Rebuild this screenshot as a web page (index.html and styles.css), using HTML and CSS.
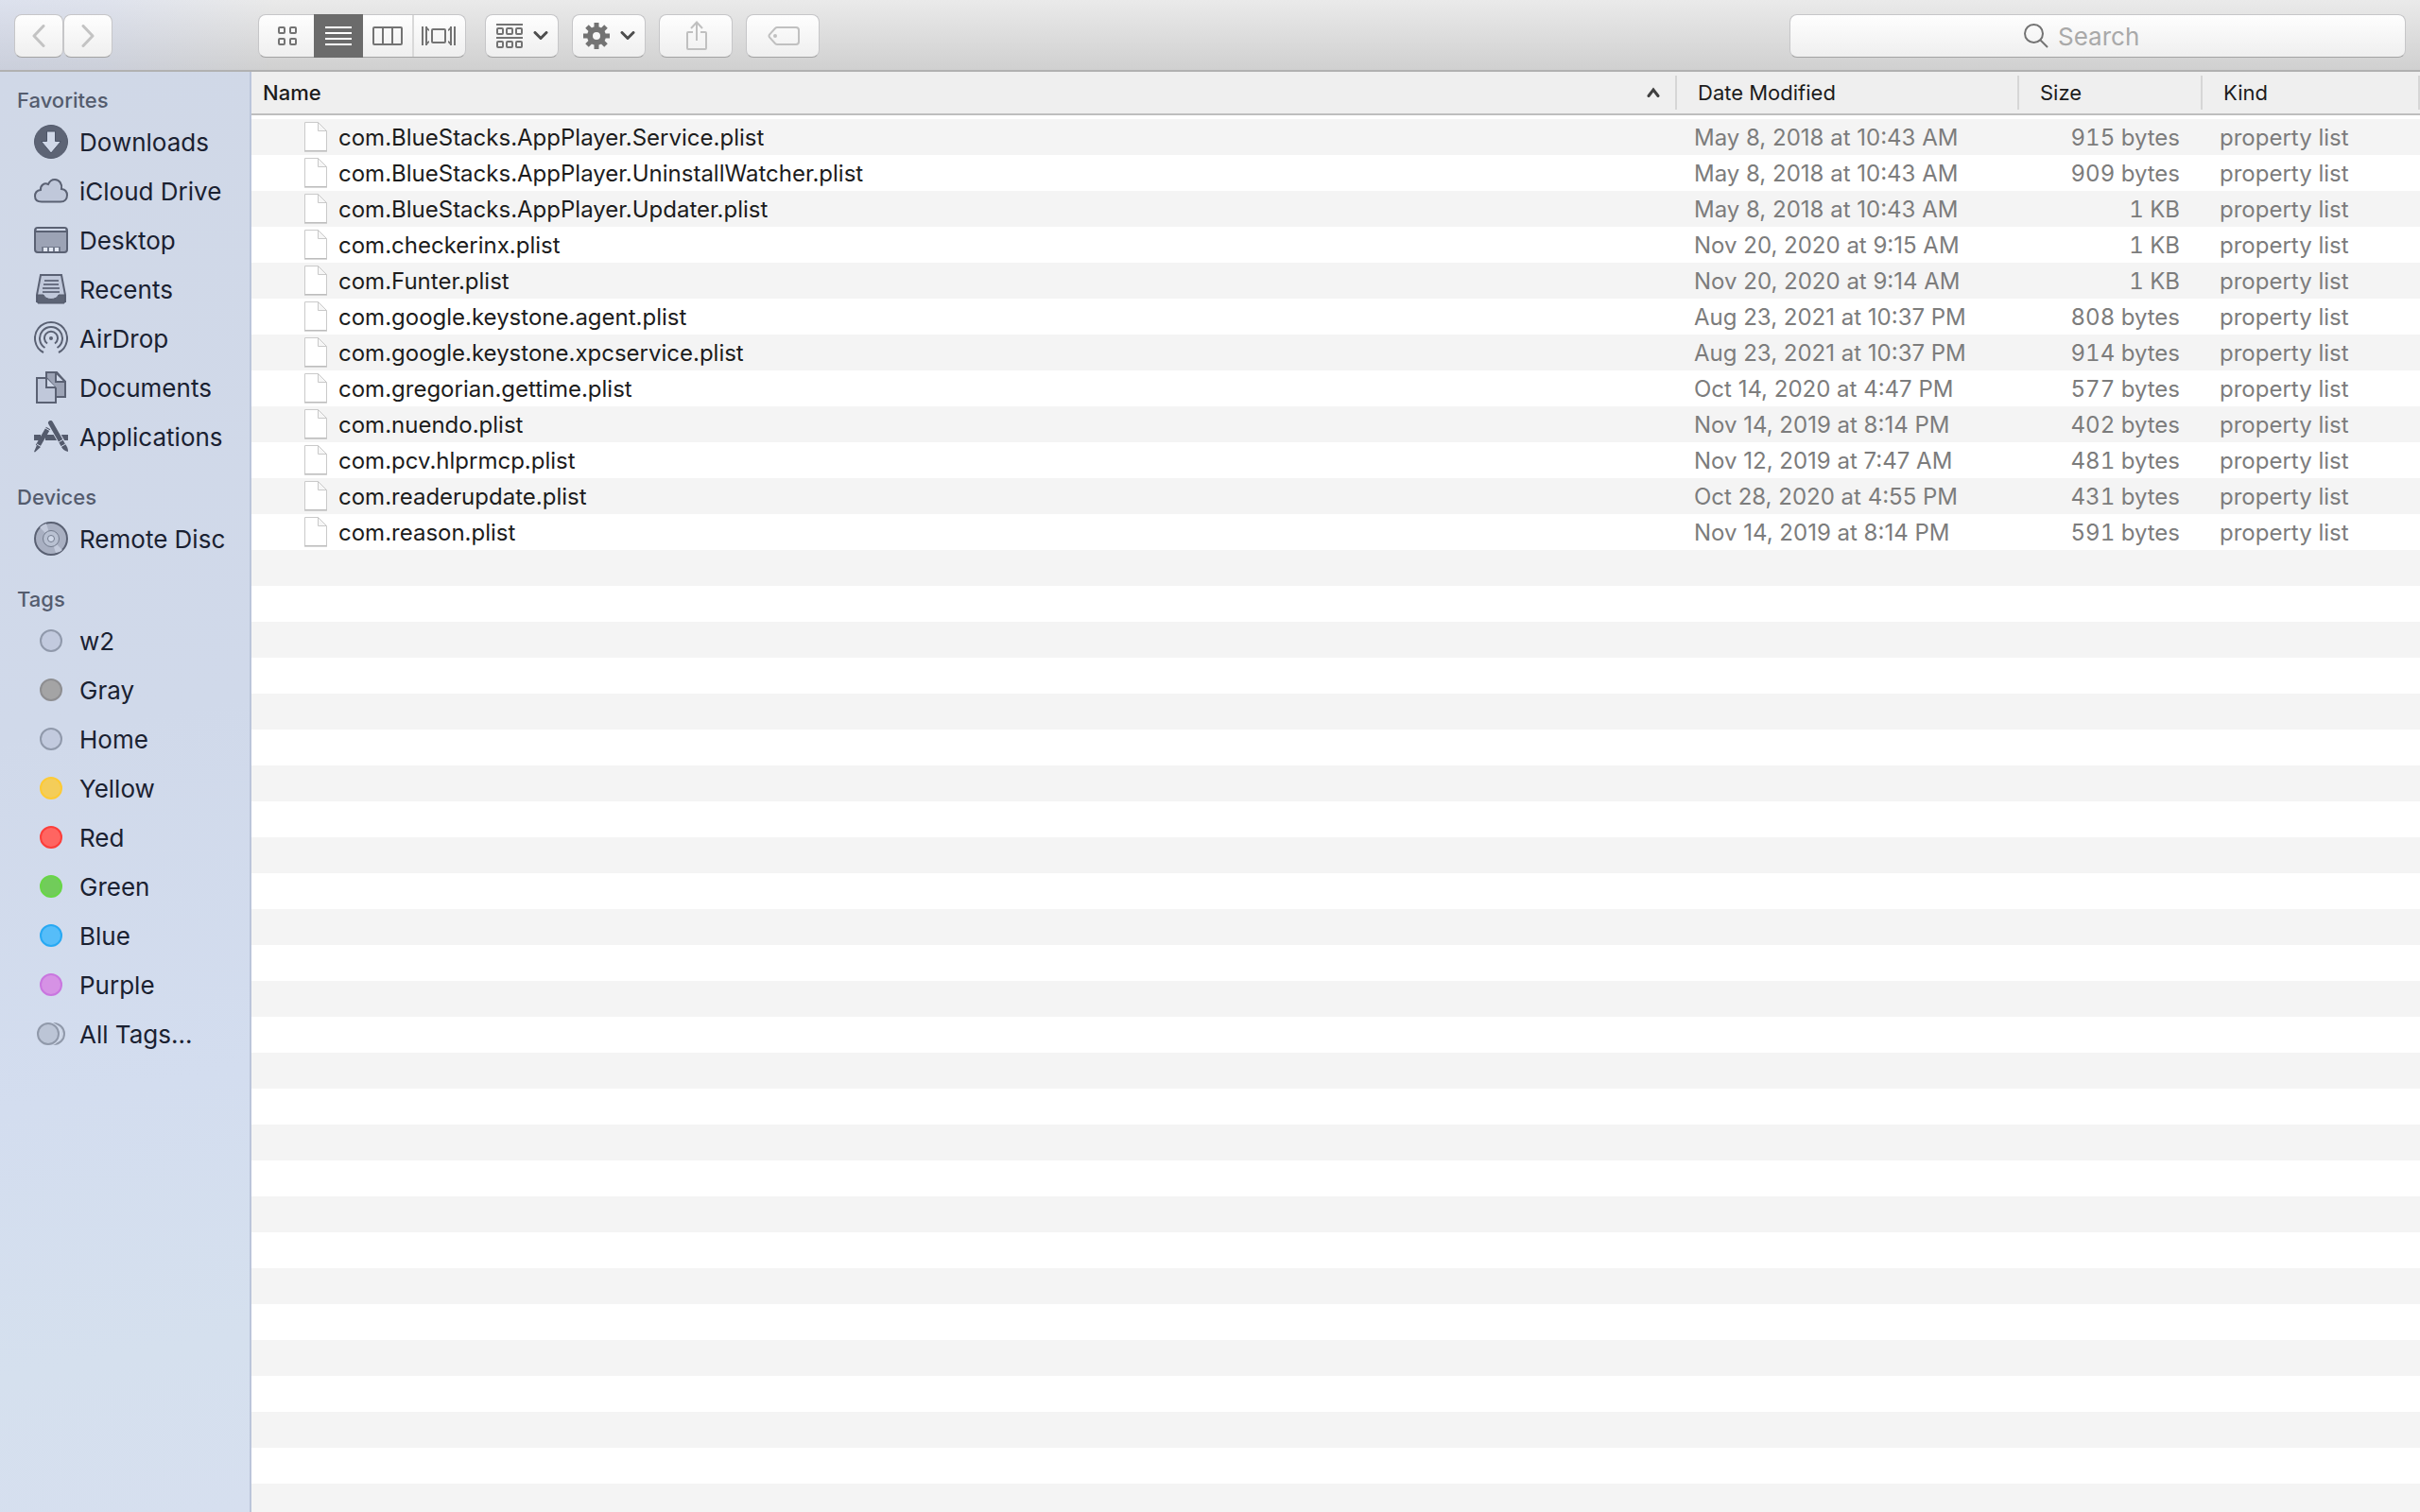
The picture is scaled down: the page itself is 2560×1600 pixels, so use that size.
FILE: index.html
```html
<!DOCTYPE html>
<html lang="en">
<head>
    <meta charset="utf-8">
    <title>LaunchAgents</title>
    <link rel="stylesheet" href="styles.css">
</head>
<body>
    <!-- shared file icon -->
    <svg class="defs" width="0" height="0" aria-hidden="true">
        <symbol id="file" viewBox="0 0 24 32">
            <path d="M.5 .5h14l9 9.500v20.500h-23z" fill="#fff" stroke="#cacaca"/>
            <path d="M14.500 .5v9h9z" fill="#f6f6f6" stroke="#c9c9c9"/>
            <path d="M0 31h24" stroke="#b0b0b0"/>
        </symbol>
        <symbol id="chevron" viewBox="0 0 16 10">
            <path d="M2 1.500l6 6 6-6" fill="none" stroke="#4d4d4d" stroke-width="3" stroke-linecap="round" stroke-linejoin="round"/>
        </symbol>
    </svg>

    <header class="toolbar">
        <div class="nav-buttons">
            <button class="btn nav" type="button" aria-label="Back">
                <svg width="14" height="24" viewBox="0 0 14 24"><path d="M12 1.500L2 12l10 10.500" fill="none" stroke="#c3c3c3" stroke-width="3" stroke-linecap="round" stroke-linejoin="round"/></svg>
            </button>
            <button class="btn nav" type="button" aria-label="Forward">
                <svg width="14" height="24" viewBox="0 0 14 24"><path d="M2 1.500L12 12 2 22.500" fill="none" stroke="#c3c3c3" stroke-width="3" stroke-linecap="round" stroke-linejoin="round"/></svg>
            </button>
        </div>

        <div class="views">
            <button class="view view-first" type="button" aria-label="Icon view">
                <svg width="20" height="20" fill="none" stroke="#737373" stroke-width="2"><rect x="1" y="1" width="6" height="6" rx="1"/><rect x="13" y="1" width="6" height="6" rx="1"/><rect x="1" y="13" width="6" height="6" rx="1"/><rect x="13" y="13" width="6" height="6" rx="1"/></svg>
            </button>
            <button class="view active" type="button" aria-label="List view" aria-pressed="true">
                <svg width="28" height="20" stroke="#fff" stroke-width="2"><path d="M0 1h28M0 7h28M0 13h28M0 19h28"/></svg>
            </button>
            <button class="view" type="button" aria-label="Column view">
                <svg width="32" height="20" fill="none" stroke="#737373" stroke-width="2"><rect x="1" y="1" width="30" height="18" rx="1"/><path d="M11 1v18M21 1v18"/></svg>
            </button>
            <button class="view view-last" type="button" aria-label="Cover Flow view">
                <svg width="36" height="20" fill="none" stroke="#737373" stroke-width="2"><rect x="11" y="3" width="14" height="14" rx="1"/><path d="M1 0v20M35 0v20M5 0v20M31 0v20"/><path d="M5 0l3 3v2L5 3zM5 20l3-3v-2l-3 2zM31 0l-3 3v2l3-2zM31 20l-3-3v-2l3 2z" fill="#737373" stroke="none"/></svg>
            </button>
        </div>

        <div class="actions">
            <button class="btn action" type="button" aria-label="Arrange">
                <svg width="28" height="26" fill="none" stroke="#737373" stroke-width="2"><path d="M0 1h28M0 15h28"/><rect x="1" y="5" width="6" height="6" rx="1"/><rect x="11" y="5" width="6" height="6" rx="1"/><rect x="21" y="5" width="6" height="6" rx="1"/><rect x="1" y="19" width="6" height="6" rx="1"/><rect x="11" y="19" width="6" height="6" rx="1"/><rect x="21" y="19" width="6" height="6" rx="1"/></svg>
                <svg width="16" height="10"><use href="#chevron"/></svg>
            </button>
            <button class="btn action" type="button" aria-label="Action">
                <svg width="28" height="28" viewBox="-14 -14 28 28"><circle r="7" fill="none" stroke="#737373" stroke-width="6"/><path d="M0-14v5M0 14v-5M-14 0h5M14 0h-5M-10-10l4 4M10 10l-4-4M-10 10l4-4M10-10l-4 4" stroke="#737373" stroke-width="5"/></svg>
                <svg width="16" height="10"><use href="#chevron"/></svg>
            </button>
            <button class="btn action" type="button" aria-label="Share">
                <svg width="22" height="32" viewBox="0 0 22 32" fill="none" stroke="#c0c0c0" stroke-width="2"><path d="M7 12H2q-1 0-1 1v16q0 1 1 1h18q1 0 1-1V13q0-1-1-1h-5M11 21V2M5 8l6-6.500L17 8"/></svg>
            </button>
            <button class="btn action" type="button" aria-label="Edit tags">
                <svg width="34" height="20" viewBox="0 0 34 20" fill="none" stroke="#c0c0c0" stroke-width="2"><path d="M10 1h20q3 0 3 3v12q0 3-3 3H10q-1 0-2-1L2 11.500Q1 10 2 8.500L8 2q1-1 2-1z"/><circle cx="8" cy="10" r="2" fill="#c0c0c0" stroke="none"/></svg>
            </button>
        </div>

        <label class="search">
            <svg width="26" height="26" viewBox="0 0 26 26" fill="none" stroke="#737373" stroke-width="2"><circle cx="10.500" cy="10.500" r="9.500"/><path d="M17 17l8 8"/></svg>
            <input type="search" placeholder="Search" aria-label="Search">
        </label>
    </header>

    <div class="window">
        <nav class="sidebar">
            <section>
                <h2>Favorites</h2>
                <ul>
                    <li><a href="#downloads">
                        <span class="icon"><svg width="36" height="36"><circle cx="18" cy="18" r="17.500" fill="#5d6475" stroke="#545b6d"/><path d="M13.500 7h9v10.500h6L18 30 7.500 17.500h6z" fill="#d0d8e8" stroke="#4c5467"/></svg></span>
                        Downloads</a></li>
                    <li><a href="#icloud">
                        <span class="icon"><svg width="36" height="26" viewBox="0 0 36 26"><path d="M8 24.500C3.500 24.500 1 22 1 18.500c0-3.500 2.500-6 6-6.500-.5-5 4-8 8-6C16.500 2.500 19 1 22 1c5 0 8 5 7 10 3.500.5 6 3 6 6.500 0 4-2.500 7-7 7z" fill="#c0c8da" stroke="#5a6173" stroke-width="2"/></svg></span>
                        iCloud Drive</a></li>
                    <li><a href="#desktop">
                        <span class="icon"><svg width="36" height="28"><rect x="1" y="1" width="34" height="26" rx="3" fill="#9ca3b5" stroke="#5a6173" stroke-width="2"/><path d="M3 2h30v2H3z" fill="#d0d8e8"/><path d="M1 5h34" stroke="#5a6173" stroke-width="2"/><path d="M8 21h20v5H8z" fill="#737b8d"/><path d="M10 22h4v4h-4zM16 22h4v4h-4zM22 22h4v4h-4z" fill="#e3e8f3"/></svg></span>
                        Desktop</a></li>
                    <li><a href="#recents">
                        <span class="icon"><svg width="32" height="32"><path d="M5 1h22l4 21v7H1v-7z" fill="#c0c8da" stroke="#5a6173" stroke-width="2"/><path d="M1 22h7c2 6 14 6 16 0h7l-1 9H2z" fill="#5d6475" stroke="#545b6d"/><path d="M9 7h15M8 11h16M7 15h18M7 19h18" stroke="#697083" stroke-width="2"/></svg></span>
                        Recents</a></li>
                    <li><a href="#airdrop">
                        <span class="icon"><svg width="36" height="36" fill="none" stroke="#5a6173" stroke-width="2"><path d="M10 33a17 17 0 1 1 16 0M11.500 28a12 12 0 1 1 13 0M14 23.500a7 7 0 1 1 8 0"/><circle cx="18" cy="18" r="2" fill="#5a6173" stroke="none"/></svg></span>
                        AirDrop</a></li>
                    <li><a href="#documents">
                        <span class="icon"><svg width="32" height="34" stroke="#5a6173" stroke-width="2"><path d="M11 1h11l9 10v16H11z" fill="#9ca3b5"/><path d="M21 1v10h10z" fill="#d0d8e8"/><path d="M1 7h10l10 11v15H1z" fill="#c0c8da"/><path d="M11 7v10h10" fill="#d0d8e8"/></svg></span>
                        Documents</a></li>
                    <li><a href="#applications">
                        <span class="icon"><svg width="36" height="34" viewBox="0 0 36 34" fill="none" stroke="#545b6d"><path d="M0 18h7M12 18h12M29 18h7" stroke-width="6"/><path d="M17.500 2.500L31 26" stroke="#d0d8e8" stroke-width="7"/><path d="M15 8L4 27" stroke-width="5"/><path d="M17.500 2.500L28 21M28.500 22l2 3.500" stroke-width="5" stroke-linecap="round"/><path d="M3 26l4 2-6 5.500-1-.5zM29 28l4-3q3 3 3 8-5-1-7-5z" fill="#545b6d" stroke="none"/><path d="M3 25l5 3M12 8l5 3M26 23l5-3M28 28l5-3" stroke="#d0d8e8"/></svg></span>
                        Applications</a></li>
                </ul>
            </section>
            <section>
                <h2>Devices</h2>
                <ul>
                    <li><a href="#disc">
                        <span class="icon"><svg width="36" height="36"><circle cx="18" cy="18" r="17" fill="#a9b0c2" stroke="#5a6173" stroke-width="2"/><path d="M18 18L6 6q3-3 7-4zM18 18l12 12q-3 3-7 3z" fill="#c3cadb"/><circle cx="18" cy="18" r="8.500" fill="#b9c1d2" stroke="#737b8d"/><circle cx="18" cy="18" r="3.500" fill="#d0d8e8" stroke="#737b8d"/></svg></span>
                        Remote Disc</a></li>
                </ul>
            </section>
            <section>
                <h2>Tags</h2>
                <ul>
                    <li><a href="#w2"><span class="icon"><i class="dot"></i></span>w2</a></li>
                    <li><a href="#gray"><span class="icon"><i class="dot gray"></i></span>Gray</a></li>
                    <li><a href="#home"><span class="icon"><i class="dot"></i></span>Home</a></li>
                    <li><a href="#yellow"><span class="icon"><i class="dot yellow"></i></span>Yellow</a></li>
                    <li><a href="#red"><span class="icon"><i class="dot red"></i></span>Red</a></li>
                    <li><a href="#green"><span class="icon"><i class="dot green"></i></span>Green</a></li>
                    <li><a href="#blue"><span class="icon"><i class="dot blue"></i></span>Blue</a></li>
                    <li><a href="#purple"><span class="icon"><i class="dot purple"></i></span>Purple</a></li>
                    <li><a href="#all-tags">
                        <span class="icon"><svg width="30" height="24" fill="#bcc5d6" stroke="#9099aa" stroke-width="2"><circle cx="18" cy="12" r="11" fill="#cdd6e6"/><circle cx="12" cy="12" r="12" fill="none" stroke="#d2dbec"/><circle cx="12" cy="12" r="11"/></svg></span>
                        All Tags...</a></li>
                </ul>
            </section>
        </nav>

        <main class="list">
            <table>
                <colgroup>
                    <col>
                    <col class="col-date">
                    <col class="col-size">
                    <col class="col-kind">
                </colgroup>
                <thead>
                    <tr>
                        <th class="name" aria-sort="ascending"><div>Name <svg width="14" height="12" viewBox="0 0 14 12"><path d="M2 9.500L7 3l5 6.500" fill="none" stroke="#404040" stroke-width="3" stroke-linecap="round"/></svg></div></th>
                        <th>Date Modified</th>
                        <th>Size</th>
                        <th>Kind</th>
                    </tr>
                </thead>
                <tbody>
                    <tr><td class="name"><div><svg width="24" height="32"><use href="#file"/></svg>com.BlueStacks.AppPlayer.Service.plist</div></td><td>May 8, 2018 at 10:43 AM</td><td class="size">915 bytes</td><td>property list</td></tr>
                    <tr><td class="name"><div><svg width="24" height="32"><use href="#file"/></svg>com.BlueStacks.AppPlayer.UninstallWatcher.plist</div></td><td>May 8, 2018 at 10:43 AM</td><td class="size">909 bytes</td><td>property list</td></tr>
                    <tr><td class="name"><div><svg width="24" height="32"><use href="#file"/></svg>com.BlueStacks.AppPlayer.Updater.plist</div></td><td>May 8, 2018 at 10:43 AM</td><td class="size">1 KB</td><td>property list</td></tr>
                    <tr><td class="name"><div><svg width="24" height="32"><use href="#file"/></svg>com.checkerinx.plist</div></td><td>Nov 20, 2020 at 9:15 AM</td><td class="size">1 KB</td><td>property list</td></tr>
                    <tr><td class="name"><div><svg width="24" height="32"><use href="#file"/></svg>com.Funter.plist</div></td><td>Nov 20, 2020 at 9:14 AM</td><td class="size">1 KB</td><td>property list</td></tr>
                    <tr><td class="name"><div><svg width="24" height="32"><use href="#file"/></svg>com.google.keystone.agent.plist</div></td><td>Aug 23, 2021 at 10:37 PM</td><td class="size">808 bytes</td><td>property list</td></tr>
                    <tr><td class="name"><div><svg width="24" height="32"><use href="#file"/></svg>com.google.keystone.xpcservice.plist</div></td><td>Aug 23, 2021 at 10:37 PM</td><td class="size">914 bytes</td><td>property list</td></tr>
                    <tr><td class="name"><div><svg width="24" height="32"><use href="#file"/></svg>com.gregorian.gettime.plist</div></td><td>Oct 14, 2020 at 4:47 PM</td><td class="size">577 bytes</td><td>property list</td></tr>
                    <tr><td class="name"><div><svg width="24" height="32"><use href="#file"/></svg>com.nuendo.plist</div></td><td>Nov 14, 2019 at 8:14 PM</td><td class="size">402 bytes</td><td>property list</td></tr>
                    <tr><td class="name"><div><svg width="24" height="32"><use href="#file"/></svg>com.pcv.hlprmcp.plist</div></td><td>Nov 12, 2019 at 7:47 AM</td><td class="size">481 bytes</td><td>property list</td></tr>
                    <tr><td class="name"><div><svg width="24" height="32"><use href="#file"/></svg>com.readerupdate.plist</div></td><td>Oct 28, 2020 at 4:55 PM</td><td class="size">431 bytes</td><td>property list</td></tr>
                    <tr><td class="name"><div><svg width="24" height="32"><use href="#file"/></svg>com.reason.plist</div></td><td>Nov 14, 2019 at 8:14 PM</td><td class="size">591 bytes</td><td>property list</td></tr>
                </tbody>
            </table>
        </main>
    </div>
</body>
</html>
```

FILE: styles.css
```css
* {
    box-sizing: border-box;
}

body {
    margin: 0;
    min-height: 100vh;
    display: flex;
    flex-direction: column;
    font-family: Inter, "Liberation Sans", sans-serif;
    font-size: 24px;
    color: #1c1c1c;
    background: #fff;
}

.defs {
    position: absolute;
}

svg {
    display: block;
    flex: none;
}

/* toolbar */
.toolbar {
    display: flex;
    align-items: center;
    padding: 15px 15px 13px;
    border-bottom: 2px solid #b1b1b1;
    background:
        linear-gradient(to right, rgba(190, 205, 245, 0.3), rgba(190, 205, 245, 0.25) 110px, rgba(190, 205, 245, 0) 290px),
        linear-gradient(#eaeaea, #d0d0d0);
}

.btn,
.views,
.search {
    height: 46px;
    border: 1px solid #c6c6c8;
    border-bottom-color: #a3a3a3;
    border-radius: 8px;
    background: linear-gradient(#fefefe, #efefef);
}

.btn {
    display: flex;
    align-items: center;
    justify-content: center;
    gap: 11px;
    padding: 0;
}

.nav-buttons {
    display: flex;
}

.nav {
    width: 52px;
}

.views {
    display: flex;
    width: 220px;
    margin-left: 154px;
}

.view {
    flex: 1;
    display: flex;
    align-items: center;
    justify-content: center;
    padding: 0;
    border: 0;
    background: none;
}

.view-first {
    flex: 0 0 58px;
    padding-left: 2px;
}

.view-last {
    flex: 0 0 56px;
    padding-right: 2px;
    border-left: 2px solid #d9d9d9;
}

.view.active {
    margin: -1px 0;
    background: #6b6b6b;
}

.actions {
    display: flex;
    gap: 14px;
    margin-left: 20px;
}

.action {
    width: 78px;
    padding-left: 1px;
}

.search {
    display: flex;
    align-items: center;
    justify-content: center;
    gap: 10px;
    width: 652px;
    margin-left: auto;
}

.search input {
    width: 120px;
    padding: 0;
    border: 0;
    outline: 0;
    appearance: none;
    background: none;
    font: inherit;
    font-size: 26px;
    color: #1c1c1c;
}

.search input::-webkit-search-cancel-button {
    display: none;
}

.search input::placeholder {
    color: #a9a9a9;
}

/* sidebar */
.window {
    flex: 1;
    display: flex;
}

.sidebar {
    flex: none;
    width: 266px;
    padding-top: 12px;
    border-right: 2px solid #bbc5da;
    background: linear-gradient(170deg, #d0d8e7, #d0d9ea 45%, #d3ddef 70%, #d5e0ee 88%, #d6dfef);
}

.sidebar section + section {
    margin-top: 20px;
}

.sidebar h2 {
    margin: 0;
    padding-left: 18px;
    font-size: 22px;
    line-height: 36px;
    font-weight: 500;
    color: #545c6e;
}

.sidebar ul {
    margin: 0;
    padding: 0;
    list-style: none;
}

.sidebar a {
    display: flex;
    align-items: center;
    gap: 12px;
    height: 52px;
    padding-left: 36px;
    font-size: 26px;
    color: #1a2131;
    text-decoration: none;
    white-space: nowrap;
}

.icon {
    display: flex;
    justify-content: center;
    width: 36px;
}

.dot {
    width: 24px;
    height: 24px;
    border: 2px solid #9099ab;
    border-radius: 50%;
    background: #c2cade;
}

.gray { background: #a4a4a5; border-color: #8e8e91; }
.yellow { background: #f4cd59; border-color: #fdca35; }
.red { background: #ff6561; border-color: #fc3e3a; }
.green { background: #71cc5a; border-color: #68d647; }
.blue { background: #56bdf9; border-color: #28a9f3; }
.purple { background: #d692e5; border-color: #c976df; }

/* file list, stripes run on below the last row */
.list {
    flex: 1;
    background: linear-gradient(#f4f4f4 50%, #fff 50%) 0 50px / 100% 76px;
}

table {
    width: 100%;
    table-layout: fixed;
    border-spacing: 0;
}

.col-date { width: 362px; }
.col-size { width: 194px; }
.col-kind { width: 230px; }

th {
    height: 46px;
    padding: 0 0 0 22px;
    border-bottom: 2px solid #bebebe;
    background: linear-gradient(#d6d6d6, #d6d6d6) right center / 2px 36px no-repeat #efefef;
    font-size: 22px;
    font-weight: 400;
    text-align: left;
}

th.name {
    padding: 0 18px 0 12px;
    font-weight: 500;
}

th.name div {
    display: flex;
    align-items: center;
    justify-content: space-between;
}

tbody::before {
    content: "";
    display: block;
    height: 4px;
}

td {
    height: 38px;
    padding: 0 0 0 18px;
    color: #7c7c7c;
    white-space: nowrap;
}

td.name {
    padding-left: 56px;
    color: #1c1c1c;
}

td.name div {
    display: flex;
    align-items: center;
    gap: 12px;
}

td.size {
    padding-right: 24px;
    text-align: right;
    font-variant-numeric: tabular-nums;
}
```
